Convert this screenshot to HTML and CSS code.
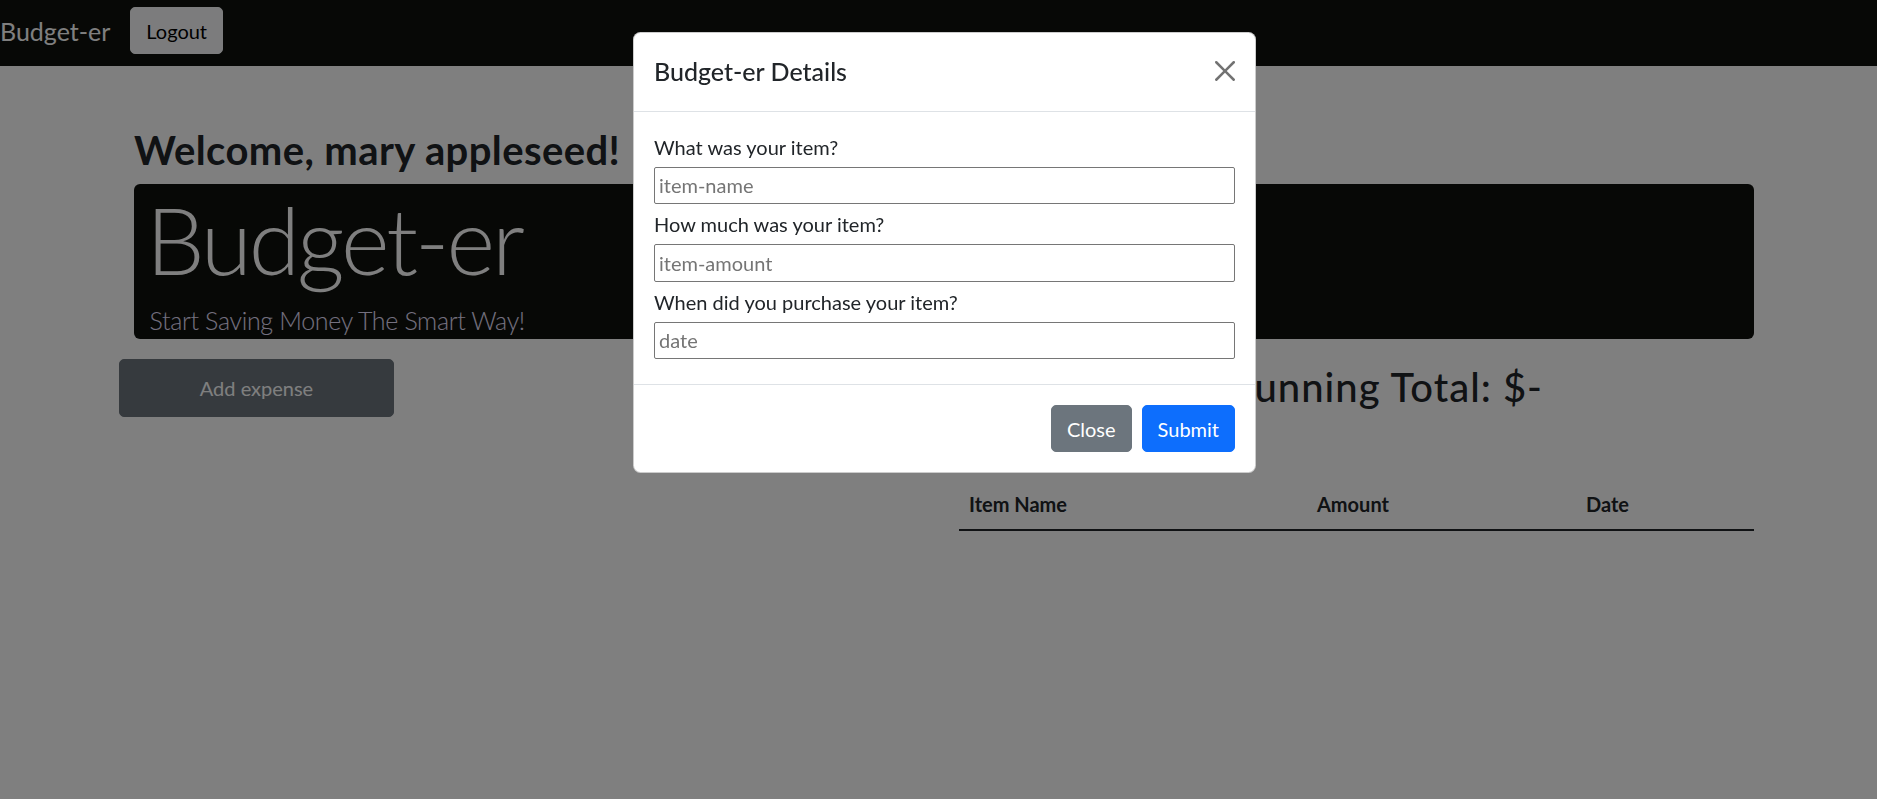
FILE: index.html
```html
<!DOCTYPE html>
<html lang="en">
<head>
<meta charset="utf-8">
<title>Budget-er</title>
<link rel="stylesheet" href="styles.css">
</head>
<body>
<nav class="navbar">
  <a class="brand" href="#">Budget-er</a>
  <button class="btn btn-light" type="button">Logout</button>
</nav>

<main class="page">
  <h2 class="welcome">Welcome, mary appleseed!</h2>
  <section class="jumbo">
    <h1 class="jumbo-title">Budget-er</h1>
    <p class="jumbo-lead">Start Saving Money The Smart Way!</p>
  </section>
  <div class="row">
    <div class="col-left">
      <button class="btn btn-add" type="button">Add expense</button>
    </div>
    <div class="col-right">
      <h2 class="total">Running Total: $-</h2>
      <table class="table">
        <thead>
          <tr>
            <th class="c-name">Item Name</th>
            <th class="c-amount">Amount</th>
            <th class="c-date">Date</th>
          </tr>
        </thead>
        <tbody></tbody>
      </table>
    </div>
  </div>
</main>

<div class="backdrop"></div>

<div class="modal">
  <div class="modal-header">
    <h5 class="modal-title">Budget-er Details</h5>
    <button class="btn-close" type="button" aria-label="Close">
      <svg viewBox="0 0 16 16" width="20" height="20"><path d="M.293.293a1 1 0 011.414 0L8 6.586 14.293.293a1 1 0 111.414 1.414L9.414 8l6.293 6.293a1 1 0 01-1.414 1.414L8 9.414l-6.293 6.293a1 1 0 01-1.414-1.414L6.586 8 .293 1.707a1 1 0 010-1.414z"/></svg>
    </button>
  </div>
  <div class="modal-body">
    <label class="field-label">What was your item?</label>
    <input class="field" type="text" placeholder="item-name">
    <label class="field-label">How much was your item?</label>
    <input class="field" type="text" placeholder="item-amount">
    <label class="field-label">When did you purchase your item?</label>
    <input class="field" type="text" placeholder="date">
  </div>
  <div class="modal-footer">
    <button class="btn btn-secondary" type="button">Close</button>
    <button class="btn btn-primary" type="button">Submit</button>
  </div>
</div>
</body>
</html>
```
FILE: styles.css
```css
* { box-sizing: border-box; }

html, body {
  margin: 0;
  padding: 0;
}

body {
  font-family: "Lato", "Roboto", sans-serif;
  font-size: 20px;
  line-height: 1.5;
  color: #212529;
  background: #fff;
  overflow: hidden;
  height: 799px;
}

/* ---------- navbar ---------- */
.navbar {
  display: flex;
  align-items: flex-start;
  height: 66px;
  padding: 7px 0 0 0;
  background: #0e100c;
}

.brand {
  font-size: 25px;
  line-height: 37.5px;
  padding: 6.25px 0;
  margin-right: 20px;
  color: #fff;
  text-decoration: none;
}

.btn {
  font-family: inherit;
  font-size: 20px;
  line-height: 30px;
  padding: 7.5px 15px;
  border: 1px solid transparent;
  border-radius: 5px;
  cursor: pointer;
}

.btn-light {
  background: #f8f9fa;
  border-color: #f8f9fa;
  color: #000;
}

/* ---------- page ---------- */
.page {
  padding: 60px 123px 0 134px;
}

.welcome {
  margin: 0 0 10px;
  font-size: 40px;
  line-height: 48px;
  font-weight: 700;
  letter-spacing: 0.4px;
}

.jumbo {
  height: 155px;
  padding-left: 12px;
  background: #0e100c;
  border-radius: 6px;
}

.jumbo-title {
  margin: 0 0 6px;
  font-size: 93px;
  line-height: 111.6px;
  font-weight: 300;
  letter-spacing: -3px;
  color: #fff;
}

.jumbo-lead {
  margin: 0;
  padding-left: 3.5px;
  font-size: 25px;
  line-height: 37.5px;
  font-weight: 300;
  letter-spacing: -0.34px;
  color: #e8e0ff;
}

.row {
  display: grid;
  grid-template-columns: 1fr 1fr;
  margin: 20px -15px 0;
}

.col-left {
  padding: 0;
}

.btn-add {
  width: 275px;
  height: 58px;
  padding: 0;
  background: #6c757d;
  border-color: #6c757d;
  color: #fff;
}

.col-right {
  padding: 0 15px;
}

.total {
  width: 584px;
  margin: 4px 0 0;
  font-size: 40px;
  line-height: 48px;
  font-weight: 500;
  letter-spacing: 1px;
  text-align: right;
}

.table {
  width: 100%;
  margin-top: 68px;
  border-collapse: collapse;
  table-layout: fixed;
}

.table th {
  padding: 10px;
  font-weight: 700;
  text-align: left;
  line-height: 30px;
  border-bottom: 2px solid #212529;
}

.c-name { width: 348px; }
.c-amount { width: 269px; }
.c-date { width: 178px; }

/* ---------- modal ---------- */
.backdrop {
  position: fixed;
  inset: 0;
  background: rgba(0, 0, 0, 0.5);
}

.modal {
  position: fixed;
  top: 32px;
  left: 633px;
  width: 623px;
  background: #fff;
  border: 1px solid rgba(0, 0, 0, 0.2);
  border-radius: 7.5px;
}

.modal-header {
  display: flex;
  align-items: flex-start;
  justify-content: space-between;
  padding: 20px;
  border-bottom: 1px solid #dee2e6;
}

.modal-title {
  margin: 0;
  font-size: 25px;
  line-height: 37.5px;
  font-weight: 500;
}

.btn-close {
  width: 30px;
  height: 30px;
  margin: 3px -5px 0 0;
  padding: 5px;
  border: 0;
  background: transparent;
  opacity: 0.55;
  cursor: pointer;
}

.btn-close svg {
  display: block;
  fill: #000;
}

.modal-body {
  padding: 20px;
}

.field-label {
  display: block;
  margin-bottom: 5px;
  line-height: 30px;
}

.field {
  display: block;
  width: 100%;
  height: 37.5px;
  margin-bottom: 5px;
  padding: 0 4px;
  font-family: inherit;
  font-size: 20px;
  color: #212529;
  border: 1px solid #767676;
  border-radius: 2px;
}

.field::placeholder {
  color: #757575;
}

.modal-footer {
  display: flex;
  justify-content: flex-end;
  padding: 15px;
  border-top: 1px solid #dee2e6;
}

.modal-footer .btn {
  margin: 5px;
}

.btn-secondary {
  background: #6c757d;
  border-color: #6c757d;
  color: #fff;
}

.btn-primary {
  background: #0d6efd;
  border-color: #0d6efd;
  color: #fff;
}
```
